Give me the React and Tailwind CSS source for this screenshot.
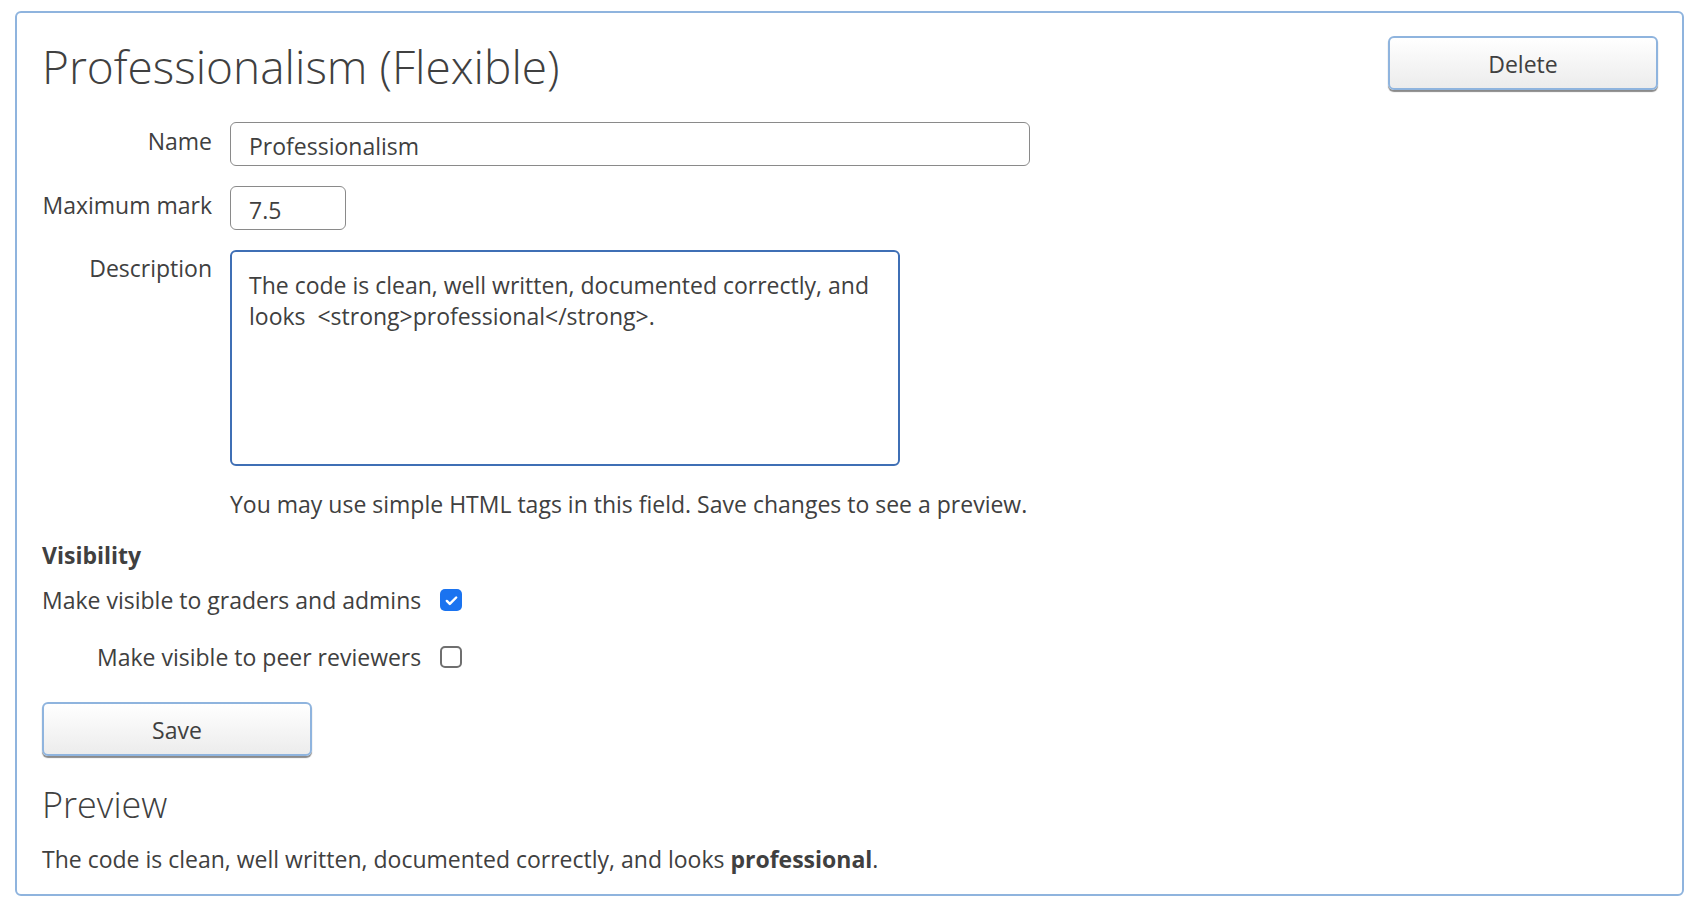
import React, { useState } from "react";

const Check = ({ checked, onChange }) => (
  <button
    type="button"
    onClick={onChange}
    className={`w-[22px] h-[22px] rounded-[5px] flex items-center justify-center ${
      checked ? "bg-[#1a73f0] border-0" : "bg-white border-2 border-[#6f6f6f]"
    }`}
  >
    {checked && (
      <svg viewBox="0 0 16 16" className="w-[15px] h-[15px]">
        <path
          d="M3 8.5l3.2 3.2L13 4.8"
          fill="none"
          stroke="white"
          strokeWidth="2.6"
          strokeLinecap="round"
          strokeLinejoin="round"
        />
      </svg>
    )}
  </button>
);

const App = () => {
  const [name, setName] = useState("Professionalism");
  const [mark, setMark] = useState("7.5");
  const [desc, setDesc] = useState(
    "The code is clean, well written, documented correctly, and looks  <strong>professional</strong>."
  );
  const [graders, setGraders] = useState(true);
  const [peers, setPeers] = useState(false);

  return (
    <div className="min-h-screen bg-white pt-[11px] pl-[15px] pr-[10px] pb-[11px] font-['Open_Sans',sans-serif] text-[23px] text-[#404040]">
      <div className="border-2 border-[#8fb4de] rounded-[6px] pl-[25px] pr-[25px] pt-[22px] pb-[20px]">
        {/* Header */}
        <div className="flex justify-between items-start">
          <h1 className="text-[46px] font-light leading-[62px]">
            Professionalism (Flexible)
          </h1>
          <button className="mt-[1px] mr-[-1px] w-[270px] h-[54px] pt-[2px] rounded-[6px] border-2 border-[#8fb4de] bg-gradient-to-b from-white to-[#ececec] shadow-[0_2px_1px_#8a8a8a] text-[23px] text-[#404040]">
            Delete
          </button>
        </div>

        {/* Fields */}
        <div className="grid grid-cols-[170px_auto] gap-x-[18px] gap-y-[20px] mt-[25px] items-start">
          <label className="text-right pt-[4px] leading-[30px] whitespace-nowrap">Name</label>
          <input
            className="w-[800px] h-[44px] rounded-[6px] border-[1.5px] border-[#8a8a8a] px-[18px] pt-[3px] text-[23px] text-[#404040] outline-none"
            value={name}
            onChange={(e) => setName(e.target.value)}
          />

          <label className="text-right pt-[4px] leading-[30px] whitespace-nowrap">Maximum mark</label>
          <input
            className="w-[116px] h-[44px] rounded-[6px] border-[1.5px] border-[#8a8a8a] px-[18px] pt-[3px] text-[23px] text-[#404040] outline-none"
            value={mark}
            onChange={(e) => setMark(e.target.value)}
          />

          <label className="text-right pt-[3px] leading-[30px] whitespace-nowrap">Description</label>
          <div>
            <textarea
              className="block w-[670px] h-[216px] rounded-[6px] border-2 border-[#3f6fb5] px-[17px] pt-[18px] text-[23px] leading-[31px] text-[#404040] outline-none resize-none"
              value={desc}
              onChange={(e) => setDesc(e.target.value)}
            />
            <p className="mt-[23px] leading-[30px] whitespace-nowrap">
              You may use simple HTML tags in this field. Save changes to see a preview.
            </p>
          </div>
        </div>

        {/* Visibility */}
        <h3 className="font-bold leading-[30px] mt-[21px]">Visibility</h3>
        <div className="grid grid-cols-[auto_auto] justify-start gap-x-[19px] gap-y-[27px] mt-[15px] items-center">
          <span className="text-right leading-[30px]">Make visible to graders and admins</span>
          <Check checked={graders} onChange={() => setGraders(!graders)} />
          <span className="text-right leading-[30px]">Make visible to peer reviewers</span>
          <Check checked={peers} onChange={() => setPeers(!peers)} />
        </div>

        <button className="mt-[30px] w-[270px] h-[54px] pt-[3px] rounded-[6px] border-2 border-[#8fb4de] bg-gradient-to-b from-white to-[#ececec] shadow-[0_2px_1px_#8a8a8a] text-[23px] text-[#404040]">
          Save
        </button>

        {/* Preview */}
        <h2 className="text-[36px] font-light leading-[46px] mt-[26px]">Preview</h2>
        <p className="leading-[30px] mt-[16px]">
          The code is clean, well written, documented correctly, and looks{" "}
          <strong className="font-bold">professional</strong>.
        </p>
      </div>
    </div>
  );
};

export default App;
